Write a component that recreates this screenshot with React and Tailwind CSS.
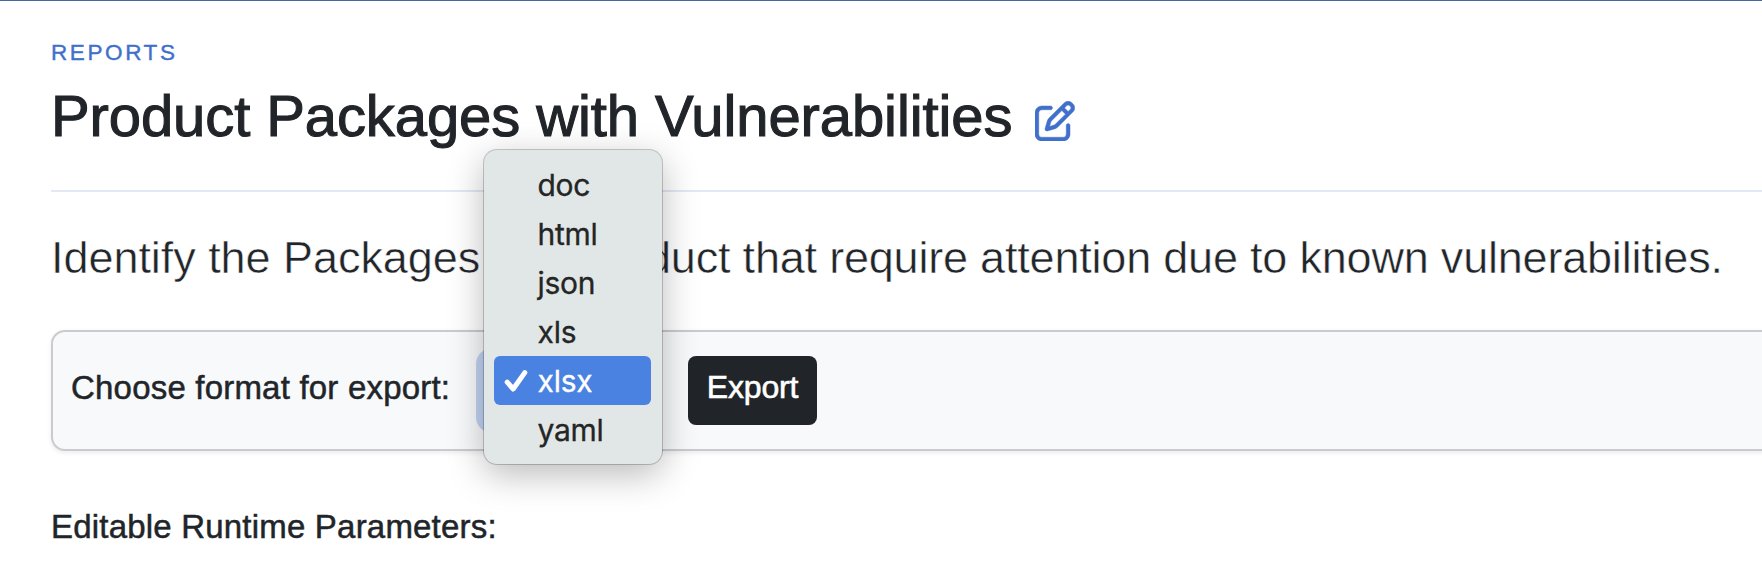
import { FaRegPenToSquare } from "react-icons/fa6";

const formats = ["doc", "html", "json", "xls", "xlsx", "yaml"];

function FormatMenu({ selected }) {
  return (
    <ul
      role="listbox"
      className="absolute left-0 top-[-206px] z-10 w-[178px] rounded-[13px] bg-[#e1e6e6] pt-[10px] pr-[11px] pb-[10px] pl-[10px] font-['Inter',sans-serif] text-[30px] leading-[49px] tracking-[-0.25px] text-[#242525] shadow-[0_0_0_1px_rgba(0,0,0,0.2),0_10px_36px_rgba(0,0,0,0.28)]"
    >
      {formats.map((name) => (
        <li
          key={name}
          role="option"
          aria-selected={name === selected}
          className={
            name === selected
              ? "flex h-[49px] items-center rounded-[6px] bg-[#4a82e1] text-white"
              : "flex h-[49px] items-center"
          }
        >
          <span className="flex w-[43.5px] shrink-0 pl-[10px]">
            {name === selected && (
              <svg width="24" height="24" viewBox="0 0 24 24" fill="none">
                <path d="M3.2 13.2 L9.2 20 L20.8 3.6" stroke="white" strokeWidth="5" strokeLinecap="round" strokeLinejoin="round" />
              </svg>
            )}
          </span>
          <span className="pt-[2px] [-webkit-text-stroke:0.3px_currentColor]">{name}</span>
        </li>
      ))}
    </ul>
  );
}

export default function App() {
  return (
    <div className="h-[562px] w-full overflow-hidden border-t border-[#48679f] bg-white font-['Liberation_Sans',sans-serif] text-[#212529]">
      <div className="flex flex-col pl-[51px] pt-[32px]">
        <div className="text-[22.5px] leading-[40px] tracking-[2.6px] text-[#4170cb] [-webkit-text-stroke:0.4px_#4170cb]">REPORTS</div>
        <header className="mt-[11px] flex items-start border-b-2 border-[#e4e8f5] pb-[42px]">
          <h1 className="whitespace-nowrap text-[58px] leading-[64px] tracking-[-0.1px] [-webkit-text-stroke:1.1px_#212529]">
            Product Packages with Vulnerabilities
          </h1>
          <FaRegPenToSquare className="ml-[23px] mt-[17px] size-[40px] text-[#4170cb]" stroke="currentColor" strokeWidth="6" />
        </header>
        <p className="mt-[36px] whitespace-nowrap text-[45px] leading-[60px] tracking-[-0.2px] [-webkit-text-stroke:0.5px_#ffffff]">
          <span className="tracking-[-0.05px]">Identify the Packages</span> in a Product that require attention due to known vulnerabilities.
        </p>
        <form className="mt-[42px] -mr-[20px] flex h-[121px] items-start rounded-[14px] border-2 border-[#c9cbce] bg-[#f8f9fb] pl-[18px] pt-[24px] shadow-[0_2px_5px_rgba(0,0,0,0.08)]">
          <label className="mt-[10px] w-[413px] whitespace-nowrap text-[33px] leading-[44px] tracking-[0.2px] [-webkit-text-stroke:0.5px_#212529]">
            Choose format for export:
          </label>
          <div className="relative h-[69px] w-[166px] rounded-[8px] bg-[#c0d3f3] shadow-[0_0_0_8px_#c0d3f3]">
            <FormatMenu selected="xlsx" />
          </div>
          <button type="button" className="ml-[38px] h-[69px] w-[129px] rounded-[8px] bg-[#212529] pb-[7px] text-[32px] leading-[62px] tracking-[-0.2px] text-white [-webkit-text-stroke:0.6px_#ffffff]">
            Export
          </button>
        </form>
        <h2 className="mt-[54px] whitespace-nowrap text-[33px] leading-[44px] tracking-[0.2px] [-webkit-text-stroke:0.5px_#212529]">
          Editable Runtime Parameters:
        </h2>
      </div>
    </div>
  );
}
